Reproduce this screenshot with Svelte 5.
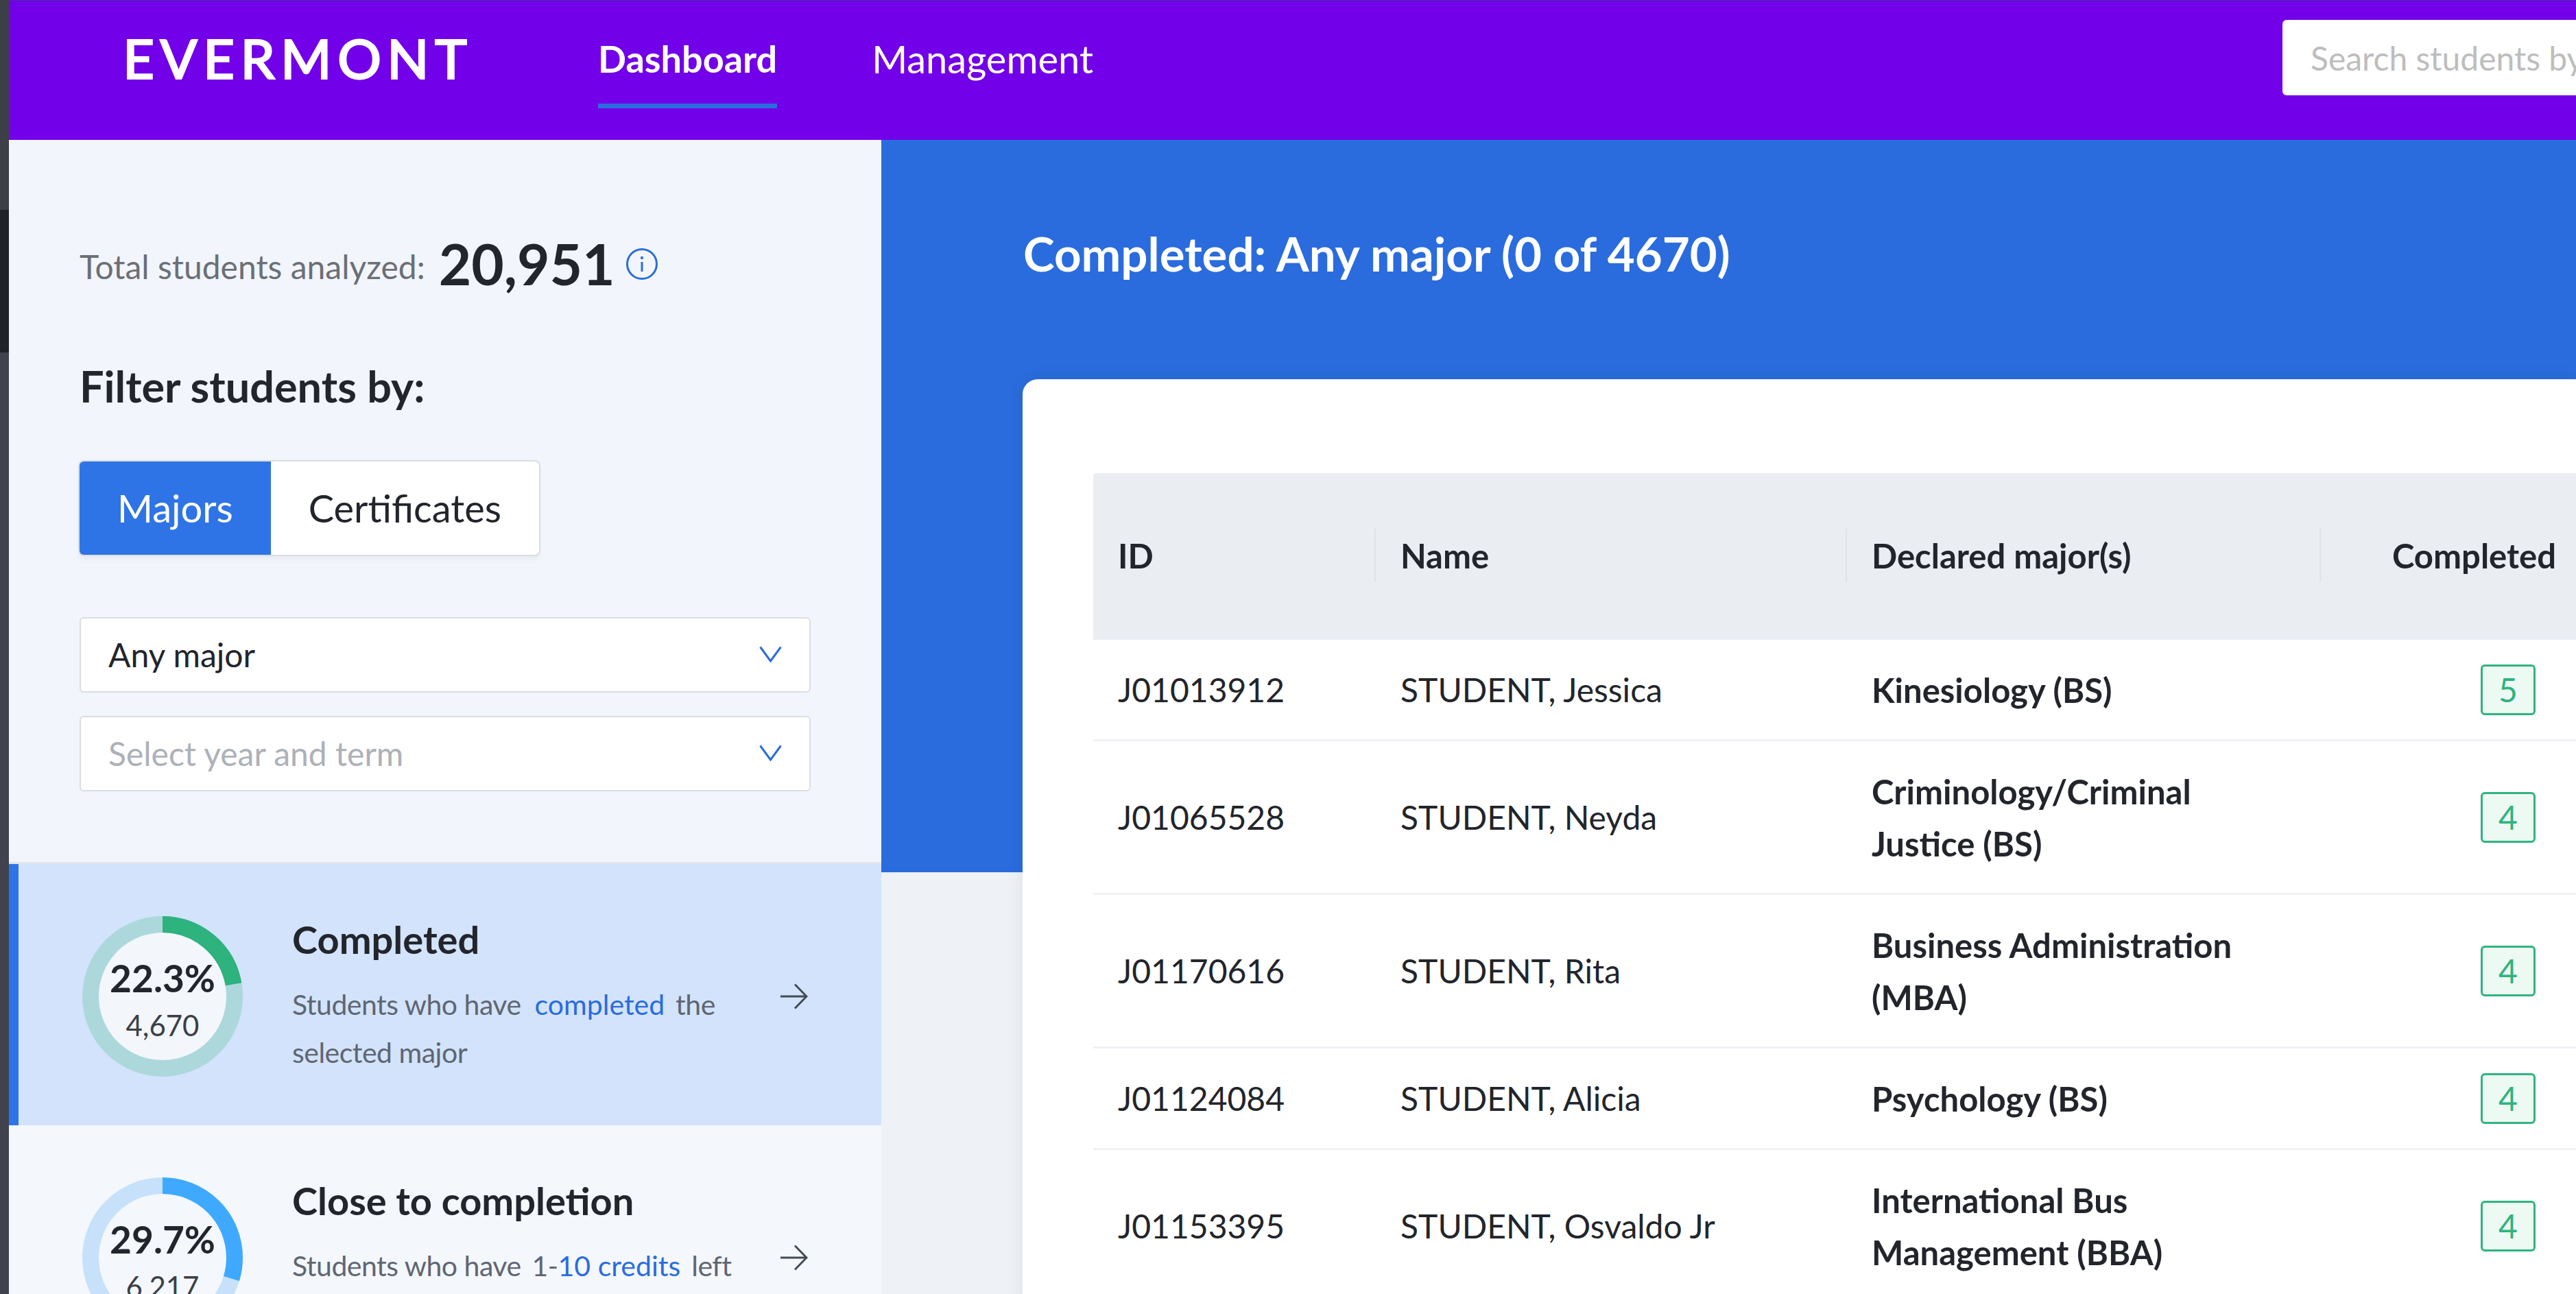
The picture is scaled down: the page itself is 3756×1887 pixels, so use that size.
<script>
  const students = [
    { id: 'J01013912', name: 'STUDENT, Jessica', major: ['Kinesiology (BS)'], done: 5 },
    { id: 'J01065528', name: 'STUDENT, Neyda', major: ['Criminology/Criminal', 'Justice (BS)'], done: 4 },
    { id: 'J01170616', name: 'STUDENT, Rita', major: ['Business Administration', '(MBA)'], done: 4 },
    { id: 'J01124084', name: 'STUDENT, Alicia', major: ['Psychology (BS)'], done: 4 },
    { id: 'J01153395', name: 'STUDENT, Osvaldo Jr', major: ['International Bus', 'Management (BBA)'], done: 4 }
  ];
</script>

<div class="screen">
  <div class="rail">
    <div class="rail-a"></div>
    <div class="rail-b"></div>
    <div class="rail-c"></div>
  </div>
  <div class="page">
    <header class="topbar">
      <div class="logo">EVERMONT</div>
      <nav class="nav">
        <span class="nav-item active">Dashboard</span>
        <span class="nav-item">Management</span>
      </nav>
      <div class="search">Search students by name</div>
    </header>

    <div class="body">
      <aside class="sidebar">
        <div class="filters">
          <div class="total">
            <span class="total-label">Total students analyzed:</span>
            <span class="total-num">20,951</span>
            <svg class="info" viewBox="0 0 48 48" fill="none" stroke="#2a6cdd">
              <circle cx="24" cy="24" r="21.5" stroke-width="3" />
              <path d="M24 21v14" stroke-width="3" />
              <path d="M24 13v4" stroke-width="3.5" />
            </svg>
          </div>
          <h2 class="filter-title">Filter students by:</h2>
          <div class="toggle">
            <span class="tab on">Majors</span>
            <span class="tab">Certificates</span>
          </div>
          <div class="select first">
            <span>Any major</span>
            <svg class="chev" viewBox="0 0 33 24" fill="none" stroke="#2a6cdd" stroke-width="3"><path d="M1.5 1.5 16.5 22 31.5 1.5" /></svg>
          </div>
          <div class="select placeholder">
            <span>Select year and term</span>
            <svg class="chev" viewBox="0 0 33 24" fill="none" stroke="#2a6cdd" stroke-width="3"><path d="M1.5 1.5 16.5 22 31.5 1.5" /></svg>
          </div>
        </div>

        <div class="stat active">
          <div class="donut">
            <svg viewBox="0 0 234 234">
              <circle cx="117" cy="117" r="105" fill="#f3f6fb" stroke="#acd8dc" stroke-width="24" />
              <circle cx="117" cy="117" r="105" fill="none" stroke="#2eb27e" stroke-width="24" pathLength="100" stroke-dasharray="22.3 100" transform="rotate(-90 117 117)" />
            </svg>
            <div class="donut-text">
              <b>22.3%</b>
              <span>4,670</span>
            </div>
          </div>
          <div class="stat-copy">
            <h3>Completed</h3>
            <p>Students who have <em class="gap">completed</em> the selected major</p>
          </div>
          <svg class="arrow" viewBox="0 0 40 38" fill="none" stroke="#444a55" stroke-width="3"><path d="M0 19h38M21 1.5 38 19 21 36.5" /></svg>
        </div>

        <div class="stat">
          <div class="donut">
            <svg viewBox="0 0 234 234">
              <circle cx="117" cy="117" r="105" fill="#f4f7fc" stroke="#c6e1f9" stroke-width="24" />
              <circle cx="117" cy="117" r="105" fill="none" stroke="#3fa9ff" stroke-width="24" pathLength="100" stroke-dasharray="29.7 100" transform="rotate(-90 117 117)" />
            </svg>
            <div class="donut-text">
              <b>29.7%</b>
              <span>6,217</span>
            </div>
          </div>
          <div class="stat-copy">
            <h3>Close to completion</h3>
            <p>Students who have <span class="lead">1-</span><em class="tail">10 credits</em> left</p>
          </div>
          <svg class="arrow" viewBox="0 0 40 38" fill="none" stroke="#444a55" stroke-width="3"><path d="M0 19h38M21 1.5 38 19 21 36.5" /></svg>
        </div>
      </aside>

      <main class="content">
        <div class="hero">
          <h1>Completed: Any major (0 of 4670)</h1>
        </div>
        <section class="card">
          <div class="row head">
            <div class="cell"><span class="h-in">ID</span></div>
            <div class="cell"><span class="h-in div">Name</span></div>
            <div class="cell"><span class="h-in div">Declared major(s)</span></div>
            <div class="cell"><span class="h-in div end">Completed</span></div>
          </div>
          {#each students as s}
            <div class="row">
              <div class="cell">{s.id}</div>
              <div class="cell">{s.name}</div>
              <div class="cell major">
                {#each s.major as line}<div>{line}</div>{/each}
              </div>
              <div class="cell end"><span class="badge">{s.done}</span></div>
            </div>
          {/each}
        </section>
      </main>
    </div>
  </div>
</div>

<style>
  :global(body) {
    margin: 0;
    font-family: Lato, "Liberation Sans", sans-serif;
    color: #22252b;
  }
  .screen {
    display: flex;
    width: 3756px;
    height: 1887px;
    overflow: hidden;
    background: #eef2f6;
  }
  .rail {
    flex: 0 0 13px;
    display: flex;
    flex-direction: column;
  }
  .rail-a { height: 306px; background: #3c3f45; }
  .rail-b { height: 208px; background: #1f2329; }
  .rail-c { flex: 1; background: #40434d; }
  .page {
    flex: 1;
    min-width: 0;
    display: flex;
    flex-direction: column;
  }
  .topbar {
    flex: 0 0 204px;
    display: flex;
    align-items: flex-start;
    background: #7200e8;
    border-top: 1px solid #4a2aa8;
    color: #fff;
    box-sizing: border-box;
  }
  .logo {
    margin: 35px 0 0 166px;
    width: 693px;
    font-size: 80px;
    line-height: 96px;
    font-weight: 500;
    letter-spacing: 8.2px;
    white-space: nowrap;
    -webkit-text-stroke: 2px #fff;
  }
  .nav {
    flex: 1;
    display: flex;
    gap: 138px;
  }
  .nav-item {
    height: 157px;
    padding-top: 51px;
    box-sizing: border-box;
    font-size: 56px;
    line-height: 68px;
    white-space: nowrap;
  }
  .nav-item.active {
    font-size: 54px;
    font-weight: 700;
    border-bottom: 7px solid #2a6cdd;
  }
  .search {
    flex: 0 0 428px;
    height: 110px;
    margin-top: 28px;
    padding: 2px 0 0 41px;
    box-sizing: border-box;
    background: #fff;
    border-radius: 6px 0 0 6px;
    color: #bdbdbd;
    font-size: 48px;
    line-height: 108px;
    white-space: nowrap;
    overflow: hidden;
  }
  .body {
    flex: 1;
    min-height: 0;
    display: flex;
  }
  .sidebar {
    flex: 0 0 1272px;
    background: #f2f5fb;
    z-index: 1;
  }
  .filters {
    height: 1056px;
    box-sizing: border-box;
    padding: 130px 105px 0 103px;
    border-bottom: 3px solid #e2e5ea;
  }
  .total {
    display: flex;
    align-items: center;
    height: 100px;
  }
  .total-label {
    font-size: 48px;
    color: #6b6f76;
    margin-top: 8px;
    white-space: nowrap;
  }
  .total-num {
    margin-left: 20px;
    font-size: 82px;
    font-weight: 700;
    color: #22252b;
    white-space: nowrap;
  }
  .info {
    width: 48px;
    height: 48px;
    margin-left: 15px;
    margin-top: 2px;
  }
  .filter-title {
    margin: 91px 0 0;
    font-size: 63px;
    line-height: 76px;
    font-weight: 700;
    white-space: nowrap;
  }
  .toggle {
    display: inline-flex;
    margin-top: 72px;
    height: 136px;
    background: #fff;
    border-radius: 6px;
    box-shadow: 0 0 0 2px #dadde1, 0 6px 8px rgba(0, 0, 0, 0.05);
  }
  .tab {
    padding: 0 55px;
    font-size: 56px;
    line-height: 136px;
    white-space: nowrap;
  }
  .tab.on {
    background: #2f74e6;
    color: #fff;
    border-radius: 6px 0 0 6px;
  }
  .select {
    display: flex;
    align-items: center;
    justify-content: space-between;
    width: 1062px;
    height: 106px;
    box-sizing: border-box;
    margin: 38px 0 0 2px;
    padding: 0 40px 2px 40px;
    background: #fff;
    border-radius: 4px;
    box-shadow: 0 0 0 2px #dadde1;
    font-size: 48px;
  }
  .select.first { margin-top: 93px; }
  .select.placeholder { color: #adb1b8; }
  .chev { width: 33px; height: 24px; }
  .stat {
    height: 381px;
    box-sizing: border-box;
    display: flex;
    align-items: flex-start;
    padding: 76px 107px 0 107px;
    background: #f4f7fc;
  }
  .stat.active {
    background: #d2e3fb;
    border-left: 14px solid #2f74e6;
    padding-left: 93px;
  }
  .donut {
    position: relative;
    flex: 0 0 234px;
    height: 234px;
  }
  .donut svg { display: block; width: 234px; height: 234px; }
  .donut-text {
    position: absolute;
    inset: 0;
    display: flex;
    flex-direction: column;
    align-items: center;
    padding-top: 56px;
    box-sizing: border-box;
  }
  .donut-text b {
    font-size: 55px;
    line-height: 68px;
    font-weight: 700;
  }
  .donut-text span {
    font-size: 42px;
    line-height: 50px;
    margin-top: 10px;
    color: #3b3f46;
  }
  .stat-copy {
    flex: 1;
    min-width: 0;
    margin-left: 72px;
  }
  h3 {
    margin: -2px 0 0;
    font-size: 56px;
    line-height: 72px;
    font-weight: 700;
    white-space: nowrap;
  }
  .stat-copy p {
    margin: 24px 0 0;
    font-size: 41px;
    line-height: 70px;
    letter-spacing: -0.5px;
    color: #5f6672;
  }
  .stat-copy em {
    font-style: normal;
    color: #2a6cdd;
    letter-spacing: 0;
  }
  .stat-copy em.gap { margin: 0 6px 0 10px; }
  .stat-copy em.tail { margin-right: 6px; }
  .lead { margin-left: 6px; }
  .arrow {
    flex: 0 0 40px;
    height: 38px;
    margin-top: 98px;
  }
  .content {
    flex: 1;
    min-width: 0;
    display: flex;
    flex-direction: column;
  }
  .hero {
    flex: 0 0 1068px;
    box-sizing: border-box;
    padding: 126px 0 0 207px;
    background: #2a6cdd;
    color: #fff;
  }
  h1 {
    margin: 0;
    font-size: 69px;
    line-height: 80px;
    font-weight: 700;
    white-space: nowrap;
  }
  .card {
    position: relative;
    margin: -719px 0 0 206px;
    padding: 137px 0 0 103px;
    flex: 1 0 auto;
    background: #fff;
    border-radius: 22px 0 0 0;
    box-shadow: 0 0 24px rgba(0, 0, 0, 0.08);
  }
  .row {
    display: grid;
    grid-template-columns: 410px 687px 691px 381px;
    align-items: center;
    min-height: 148px;
    box-sizing: border-box;
    padding: 34.5px 0;
    border-bottom: 3px solid #eff1f4;
    font-size: 48px;
    line-height: 76px;
  }
  .row .cell { padding: 0 36px 0 36px; min-width: 0; white-space: nowrap; }
  .row .cell:nth-child(2), .row .cell:nth-child(3) { padding-left: 38px; }
  .row.head {
    height: 243px;
    padding: 0;
    background: #eaedf2;
    border-bottom: 0;
    border-radius: 4px 0 0 0;
    font-size: 49px;
    font-weight: 700;
  }
  .row.head .cell { padding: 0; }
  .h-in {
    display: block;
    height: 78px;
    padding-left: 36px;
    line-height: 78px;
    margin-top: -3px;
  }
  .h-in.div {
    border-left: 2px solid #dfe2e7;
    padding-left: 36px;
  }
  .h-in.end {
    padding: 0 36px 0 0;
    text-align: right;
  }
  .major { font-size: 49px; font-weight: 700; }
  .cell.end {
    display: flex;
    justify-content: flex-end;
    align-items: center;
  }
  .badge {
    display: block;
    width: 80px;
    height: 74px;
    margin-right: 30px;
    box-sizing: border-box;
    border: 3px solid #2fb380;
    border-radius: 6px;
    background: #edfaf4;
    color: #2fb380;
    text-align: center;
    line-height: 68px;
  }
</style>
